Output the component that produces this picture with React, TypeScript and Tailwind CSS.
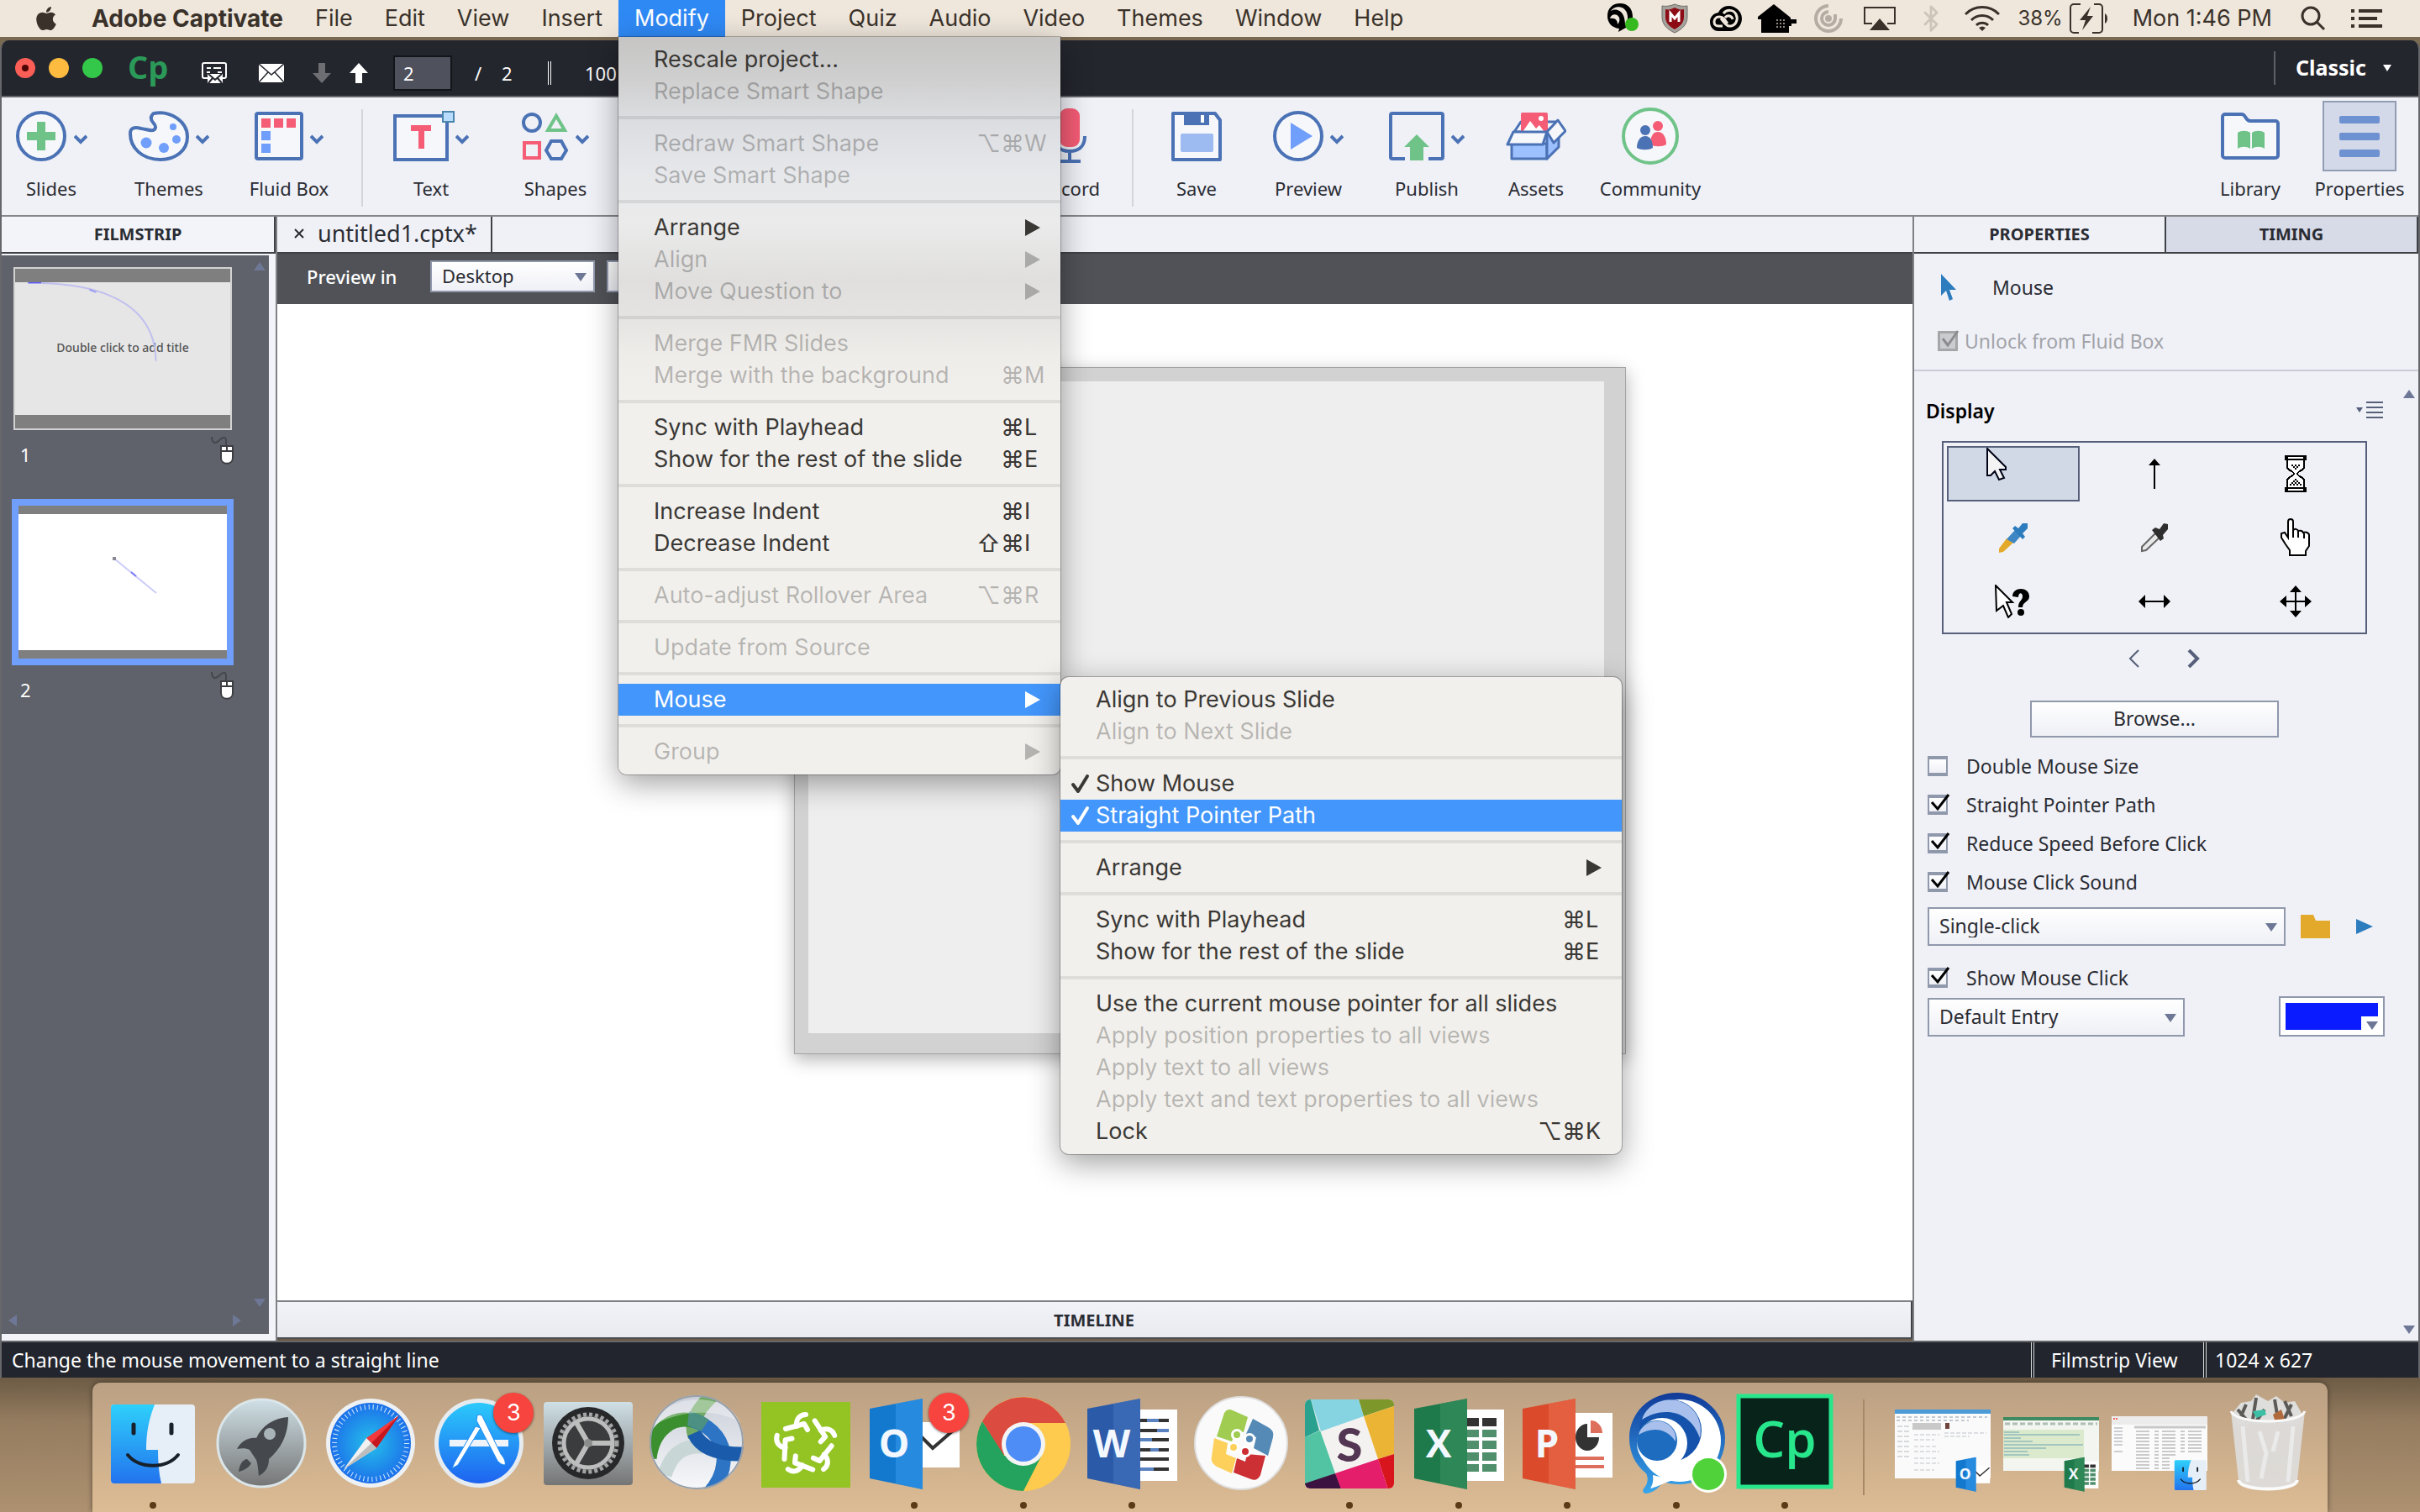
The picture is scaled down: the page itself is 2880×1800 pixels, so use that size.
import { useState, type ReactNode } from 'react';
import { Bluetooth } from 'lucide-react';
import { FaApple } from 'react-icons/fa';
import clsx from 'clsx';

interface MenuEntry {
    label: string;
    keys?: string[];
    off?: boolean;
    active?: boolean;
    checked?: boolean;
    arrow?: boolean;
    submenu?: MenuEntry[][];
}

const mouseMenu: MenuEntry[][] = [
    [{ label: 'Align to Previous Slide' }, { label: 'Align to Next Slide', off: true }],
    [{ label: 'Show Mouse', checked: true }, { label: 'Straight Pointer Path', checked: true, active: true }],
    [{ label: 'Arrange', arrow: true }],
    [
        { label: 'Sync with Playhead', keys: ['⌘', 'L'] },
        { label: 'Show for the rest of the slide', keys: ['⌘', 'E'] },
    ],
    [
        { label: 'Use the current mouse pointer for all slides' },
        { label: 'Apply position properties to all views', off: true },
        { label: 'Apply text to all views', off: true },
        { label: 'Apply text and text properties to all views', off: true },
        { label: 'Lock', keys: ['⌥⌘', 'K'] },
    ],
];

const modifyMenu: MenuEntry[][] = [
    [{ label: 'Rescale project...' }, { label: 'Replace Smart Shape', off: true }],
    [
        { label: 'Redraw Smart Shape', off: true, keys: ['⌥⌘', 'W'] },
        { label: 'Save Smart Shape', off: true },
    ],
    [
        { label: 'Arrange', arrow: true },
        { label: 'Align', off: true, arrow: true },
        { label: 'Move Question to', off: true, arrow: true },
    ],
    [
        { label: 'Merge FMR Slides', off: true },
        { label: 'Merge with the background', off: true, keys: ['⌘', 'M'] },
    ],
    [
        { label: 'Sync with Playhead', keys: ['⌘', 'L'] },
        { label: 'Show for the rest of the slide', keys: ['⌘', 'E'] },
    ],
    [
        { label: 'Increase Indent', keys: ['⌘', 'I'] },
        { label: 'Decrease Indent', keys: ['⇧⌘', 'I'] },
    ],
    [{ label: 'Auto-adjust Rollover Area', off: true, keys: ['⌥⌘', 'R'] }],
    [{ label: 'Update from Source', off: true }],
    [{ label: 'Mouse', active: true, arrow: true, submenu: mouseMenu }],
    [{ label: 'Group', off: true, arrow: true }],
];

function MenuRow({ entry }: { entry: MenuEntry }) {
    return (
        <li className="relative">
            <button
                disabled={entry.off}
                className={clsx(
                    'flex h-[38px] w-full items-center pr-[15px] text-left',
                    entry.active ? 'bg-[#4396fb] text-white' : entry.off ? 'text-black/25' : 'text-[#3a3835]',
                )}
            >
                <span className="flex w-[42px] shrink-0 items-center pl-3">
                    {entry.checked && (
                        <svg width="24" height="24" viewBox="0 0 24 24" fill="none" stroke="currentColor" strokeWidth="4" strokeLinecap="round" strokeLinejoin="round">
                            <path d="M3 13l6 8L20 3" />
                        </svg>
                    )}
                </span>
                <span className="flex-1 whitespace-nowrap">{entry.label}</span>
                {entry.keys && (
                    <>
                        <span className="text-[28px]">{entry.keys[0]}</span>
                        <span className="w-7">{entry.keys[1]}</span>
                    </>
                )}
                {entry.arrow && (
                    <svg width="27" height="20" viewBox="0 0 27 20" fill="currentColor">
                        <path d="M0 0l18 10L0 20z" />
                    </svg>
                )}
            </button>
            {entry.submenu && (
                <Menu
                    groups={entry.submenu}
                    className="absolute -top-2 left-full w-[668px] rounded-[10px] bg-[#f2f0ec]"
                />
            )}
        </li>
    );
}

function Menu({ groups, className }: { groups: MenuEntry[][]; className: string }) {
    return (
        <ul className={clsx('py-2 shadow-[0_10px_36px_rgba(0,0,0,0.38),0_0_0_1px_rgba(0,0,0,0.25)]', className)}>
            {groups.map((group, i) => (
                <li key={i}>
                    {i > 0 && <div className="my-[10px] h-1 bg-black/8" />}
                    <ul>
                        {group.map((entry) => (
                            <MenuRow key={entry.label} entry={entry} />
                        ))}
                    </ul>
                </li>
            ))}
        </ul>
    );
}

const menus = ['File', 'Edit', 'View', 'Insert', 'Modify', 'Project', 'Quiz', 'Audio', 'Video', 'Themes', 'Window', 'Help'];

const statusIcons: ReactNode[] = [
    <svg width="40" height="36" viewBox="0 0 40 36">
        <path d="M16 0c9 0 15 6 15 16 0 7-4 12-10 14l-7 4 1-4C6 29 1 23 1 15 1 6 7 0 16 0z" fill="#000" />
        <path d="M5 9C9 3 20 2 24 11c2 6 1 11-2 15 0-8-2-16-9-18-3-1-6 0-8 1zM4 18c1-5 8-7 11-1 1 3 0 6-2 8 0-4-2-8-9-7z" fill="#efe7dc" />
        <circle cx="30" cy="25" r="8" fill="#35b91f" />
    </svg>,
    <svg width="32" height="36" viewBox="0 0 32 36">
        <path d="M1 3C6 4 11 3 16 1c5 2 10 3 15 2v13c0 9-6 15-15 19C7 31 1 25 1 16z" fill="#a5a29c" stroke="#6f6d69" />
        <path d="M5 7c4 1 7 0 11-2 4 2 7 3 11 2v9c0 7-4 11-11 15C9 27 5 23 5 16z" fill="#8d0b14" />
        <path d="M11 22V12l5 6 5-6v10" fill="none" stroke="#fff" strokeWidth="3" />
    </svg>,
    <svg width="40" height="30" viewBox="0 0 40 30">
        <path d="M23 0c9 0 16 7 16 15S33 30 25 30H11C5 30 1 25 1 19S5 9 11 8c2-5 7-8 12-8z" fill="#000" />
        <path d="M27 24h-3c-3 0-4-2-6-4l-4-5M16 24h-5c-3 0-5-2-5-5s2-6 6-6c5 0 7 4 10 8M17 9c4-5 12-5 15 1s0 13-6 14M19 14c3-4 8-2 9 2" fill="none" stroke="#efe7dc" strokeWidth="3" />
    </svg>,
    <svg width="46" height="34" viewBox="0 0 46 34">
        <path d="M19 0l20 16v2h7v5h-6v3h-3v8H4V18H0v-3z" fill="#000" />
        <path d="M22 19h12M22 23h12M22 27h12" stroke="#8d8880" strokeWidth="2" strokeDasharray="2 2" />
    </svg>,
    <svg width="34" height="34" viewBox="0 0 34 34" fill="none" stroke="#b5ada3" strokeWidth="4">
        <path d="M17 2a15 15 0 1 0 15 15M17 9a8 8 0 1 0 8 8V12" />
        <circle cx="17" cy="17" r="2" />
    </svg>,
    <svg width="38" height="30" viewBox="0 0 38 30">
        <path d="M10 21H1V2h36v19h-9" fill="none" stroke="#3a322a" strokeWidth="2" />
        <path d="M19 15l12 14H7z" fill="#3a322a" />
    </svg>,
    <Bluetooth width={34} height={34} strokeWidth={2} className="text-[#cdc4ba]" />,
    <svg width="42" height="30" viewBox="0 0 42 30" fill="none" stroke="#3a322a" strokeWidth="3">
        <path d="M1 10a28 28 0 0 1 40 0M8 17a18 18 0 0 1 26 0M14 23a10 10 0 0 1 14 0" />
        <path d="M17 26q4-3 8 0l-4 4z" fill="#3a322a" stroke="none" />
    </svg>,
];

function MenuBar() {
    const [open, setOpen] = useState('Modify');

    return (
        <header className="relative z-20 flex h-11 items-center justify-between bg-[#efe7dc] pl-[23px] pr-[45px] font-['Inter',sans-serif] text-[27px] leading-[34px] text-[#3a322a]">
            <nav className="flex h-full items-center">
                <button className="flex w-[67px] justify-center pr-1" aria-label="Apple">
                    <FaApple size={32} />
                </button>
                <button className="px-[19px] text-[28px] font-bold whitespace-nowrap">Adobe Captivate</button>
                {menus.map((name) => (
                    <div key={name} className="relative h-full">
                        <button
                            onClick={() => setOpen(name)}
                            className={clsx('h-full px-[19px]', open === name && 'bg-[#2f89f5] text-white')}
                        >
                            {name}
                        </button>
                        {name === 'Modify' && open === name && (
                            <Menu
                                groups={modifyMenu}
                                className="absolute top-full left-0 w-[526px] rounded-b-[10px] bg-[linear-gradient(180deg,#c6c5c4_0px,#cfcfcf_50px,#dadbde_90px,#e6e7ea_160px,#ebebeb_220px,#e0dfde_290px,#e4e3e1_330px,#efedea_380px,#f2f0ed_440px)]"
                            />
                        )}
                    </div>
                ))}
            </nav>
            <div className="flex items-center">
                {statusIcons.map((icon, i) => (
                    <span key={i} className="flex w-[61px] justify-center">{icon}</span>
                ))}
                <span className="ml-3 text-[24px]">38%</span>
                <svg width="46" height="38" viewBox="0 0 46 38" fill="none" stroke="#3a322a" strokeWidth="2" className="ml-2">
                    <path d="M13 2H5a4 4 0 0 0-4 4v26a4 4 0 0 0 4 4h6M29 2h6a4 4 0 0 1 4 4v26a4 4 0 0 1-4 4h-8" />
                    <path d="M25 5L12 21h7l-4 12 13-17h-7z" fill="#3a322a" stroke="none" />
                    <path d="M42 13c4 2 4 10 0 12z" fill="#3a322a" stroke="none" />
                </svg>
                <span className="ml-[29px] whitespace-nowrap">Mon 1:46 PM</span>
                <svg width="30" height="30" viewBox="0 0 30 30" fill="none" stroke="#3a322a" strokeWidth="3" className="ml-[34px]">
                    <circle cx="12" cy="12" r="10" />
                    <path d="M19 19l9 9" />
                </svg>
                <svg width="37" height="22" viewBox="0 0 37 22" fill="#3a322a" className="ml-[30px]">
                    <path d="M0 0h4v4H0zM9 0h28v4H9zM0 9h4v4H0zM9 9h22v4H9zM0 18h4v4H0zM9 18h28v4H9z" />
                </svg>
            </div>
        </header>
    );
}

function TitleBar() {
    return (
        <div className="flex h-[68px] shrink-0 justify-between border-b-2 border-[#66676b] bg-[#24262e] text-white">
            <div className="flex items-center pl-4">
                <div className="flex gap-4">
                    <button aria-label="Close" className="flex size-6 items-center justify-center rounded-full bg-[#fb5e57]">
                        <span className="size-2 rounded-full bg-[#4d0503]" />
                    </button>
                    <button aria-label="Minimize" className="size-6 rounded-full bg-[#fdbc40]" />
                    <button aria-label="Zoom" className="size-6 rounded-full bg-[#34c84a]" />
                </div>
                <span className="ml-[30px] w-12 pb-1 font-['Open_Sans',sans-serif] text-[38px] leading-10 font-bold text-[#2b9a58]">Cp</span>
                <div className="flex h-full items-center pt-3">
                    <button aria-label="Storyboard" className="ml-10">
                        <svg width="30" height="26" viewBox="0 0 30 26" fill="none" stroke="#fff" strokeWidth="2">
                            <path d="M8 19H3a2 2 0 0 1-2-2V3a2 2 0 0 1 2-2h24a2 2 0 0 1 2 2v14a2 2 0 0 1-2 2h-5M6 7h5M14 7h9M6 12h4M19 12h5" />
                            <path d="M7 14h18v11H7z" fill="#fff" stroke="none" />
                            <path d="M8 14l8 7 8-7M8 25l5-6M24 25l-5-6" stroke="#24262e" />
                        </svg>
                    </button>
                    <button aria-label="Mail" className="ml-[38px]">
                        <svg width="30" height="22" viewBox="0 0 30 22">
                            <path d="M0 0h30v22H0z" fill="#fff" />
                            <path d="M0 0l15 13L30 0M0 22l11-12M30 22L19 10" fill="none" stroke="#24262e" strokeWidth="1.5" />
                        </svg>
                    </button>
                    <button aria-label="Next slide" className="ml-[34px]">
                        <svg width="22" height="24" viewBox="0 0 22 24" fill="#6d6e72">
                            <path d="M7 0h8v12h7L11 24 0 12h7z" />
                        </svg>
                    </button>
                    <button aria-label="Previous slide" className="ml-[22px]">
                        <svg width="22" height="24" viewBox="0 0 22 24" fill="#fff">
                            <path d="M7 24h8V12h7L11 0 0 12h7z" />
                        </svg>
                    </button>
                    <input
                        aria-label="Slide number"
                        defaultValue="2"
                        className="ml-[30px] h-[42px] w-[70px] border-2 border-[#14151a] bg-[#4f515c] px-2.5 text-[22px]"
                    />
                    <span className="ml-[27px] w-8 text-[22px]">/</span>
                    <span className="w-[55px] text-[22px]">2</span>
                    <span className="h-7 w-1 border-x border-white" />
                    <span className="ml-10 text-[22px]">100</span>
                </div>
            </div>
            <div className="flex items-center pr-8">
                <span className="h-10 w-0.5 bg-[#5d5f66]" />
                <button className="ml-6 flex items-center gap-5 text-[25px] font-bold">
                    Classic
                    <svg width="10" height="8" viewBox="0 0 10 8" fill="#fff">
                        <path d="M0 0h10L5 8z" />
                    </svg>
                </button>
            </div>
        </div>
    );
}

function Tool({ label, chevron, className, children }: { label: string; chevron?: boolean; className: string; children: ReactNode }) {
    return (
        <button className={clsx('flex shrink-0 flex-col items-center pt-4', className)}>
            <span className="flex h-[60px] items-center gap-2">
                {children}
                {chevron && (
                    <svg width="16" height="12" viewBox="0 0 16 12" fill="none" stroke="#4a72b5" strokeWidth="4" className="mt-2">
                        <path d="M1 2l7 7 7-7" />
                    </svg>
                )}
            </span>
            <span className="mt-[18px] text-[22px] leading-7 whitespace-nowrap">{label}</span>
        </button>
    );
}

function Divider() {
    return <span className="mt-3.5 h-[116px] w-0.5 shrink-0 bg-[#d3d5da]" />;
}

function Toolbar() {
    return (
        <div className="flex h-[142px] shrink-0 justify-between border-b-2 border-[#868689] bg-[#f0f1f7] pr-0.5 text-[#2a2c33]">
            <div className="flex">
                <Tool label="Slides" chevron className="w-[118px]">
                    <svg width="62" height="60" viewBox="0 0 62 60">
                        <circle cx="31" cy="30" r="28" fill="#f6f7fb" stroke="#4a72b5" strokeWidth="4" />
                        <path d="M26 13h10v12h12v10H36v12H26V35H14V25h12z" fill="#6fc388" />
                    </svg>
                </Tool>
                <Tool label="Themes" chevron className="w-[162px]">
                    <svg width="72" height="60" viewBox="0 0 72 60">
                        <path d="M30 3c19-4 40 9 40 28 0 16-14 27-32 27C16 58 2 44 2 27c0-7 5-8 13-6 7 1 16 5 17-1 1-5-7-7-5-13 1-2 2-4 3-4z" fill="#f6f7fb" stroke="#4a72b5" strokeWidth="4" />
                        <circle cx="21" cy="38" r="6.500" fill="#709efb" />
                        <circle cx="42" cy="44" r="6" fill="#709efb" />
                        <circle cx="57" cy="34" r="5" fill="#709efb" />
                        <circle cx="53" cy="19" r="4" fill="#709efb" />
                    </svg>
                </Tool>
                <Tool label="Fluid Box" chevron className="w-[124px]">
                    <svg width="58" height="58" viewBox="0 0 58 58">
                        <rect x="2" y="2" width="54" height="54" rx="2" fill="#f6f7fb" stroke="#4a72b5" strokeWidth="4" />
                        <path d="M8 8h11v11H8zM23 8h11v11H23zM38 8h11v11H38z" fill="#f55c75" />
                        <path d="M8 23h11v11H8zM8 38h11v11H8z" fill="#709efb" />
                    </svg>
                </Tool>
                <span className="w-6" />
                <Divider />
                <span className="w-[19px]" />
                <Tool label="Text" chevron className="w-[124px]">
                    <svg width="66" height="60" viewBox="0 0 66 60" className="overflow-visible">
                        <rect x="2" y="6" width="62" height="52" fill="#f6f7fb" stroke="#4a72b5" strokeWidth="4" />
                        <path d="M21 17h24v7H37v21h-7V24h-9z" fill="#f55c75" />
                        <rect x="59" y="1" width="13" height="12" fill="#b8dcfb" stroke="#4d86ad" strokeWidth="2" />
                    </svg>
                </Tool>
                <Tool label="Shapes" chevron className="w-[172px]">
                    <svg width="56" height="60" viewBox="0 0 56 60" fill="none" strokeWidth="4">
                        <circle cx="12" cy="14" r="10" stroke="#4a72b5" />
                        <path d="M41 6l10 17H31z" stroke="#6fc388" />
                        <rect x="3" y="38" width="18" height="18" stroke="#f55c75" />
                        <path d="M35 36h12l6 11-6 10H35l-6-10z" stroke="#4a72b5" />
                    </svg>
                </Tool>
                <span className="w-[452px] shrink-0" />
                <Tool label="Record" className="w-[148px]">
                    <svg width="42" height="66" viewBox="0 0 42 66">
                        <rect x="9" y="0" width="24" height="46" rx="9" fill="#f55c75" />
                        <path d="M3 33c0 12 7 18 18 18s18-6 18-18M21 51v12M8 63h26" fill="none" stroke="#4a72b5" strokeWidth="4" />
                    </svg>
                </Tool>
                <Divider />
                <Tool label="Save" className="w-[150px]">
                    <svg width="60" height="60" viewBox="0 0 60 60">
                        <path d="M2 3h50l6 8v47H2z" fill="#f6f7fb" stroke="#4a72b5" strokeWidth="4" strokeLinejoin="round" />
                        <path d="M15 3h30v14H15z" fill="#4a72b5" />
                        <path d="M35 5h4v9h-4z" fill="#fff" />
                        <rect x="11" y="27" width="39" height="22" rx="2" fill="#9dbbf0" />
                    </svg>
                </Tool>
                <Tool label="Preview" chevron className="w-[116px]">
                    <svg width="60" height="60" viewBox="0 0 60 60">
                        <circle cx="30" cy="30" r="28" fill="#f6f7fb" stroke="#4a72b5" strokeWidth="4" />
                        <path d="M21 14l26 16-26 16z" fill="#709efb" />
                    </svg>
                </Tool>
                <Tool label="Publish" chevron className="w-[166px]">
                    <svg width="66" height="58" viewBox="0 0 66 58">
                        <path d="M19 56H4a2 2 0 0 1-2-2V4a2 2 0 0 1 2-2h58a2 2 0 0 1 2 2v50a2 2 0 0 1-2 2H47" fill="none" stroke="#4a72b5" strokeWidth="4" />
                        <path d="M25 58V42h-7l15-15 15 15h-7v16z" fill="#6fc388" />
                    </svg>
                </Tool>
                <Tool label="Assets" className="w-[94px]">
                    <svg width="72" height="58" viewBox="0 0 72 58" stroke="#4a72b5" strokeWidth="3" strokeLinejoin="round">
                        <path d="M10 24l8-12h44l-14 12z" fill="#f6f7fb" />
                        <rect x="18" y="1" width="32" height="26" rx="2" fill="#f55c75" stroke="none" />
                        <path d="M20 24l9-13 7 9 4-4 6 8z" fill="#fff" stroke="none" />
                        <circle cx="42" cy="8" r="3" fill="#fff" stroke="none" />
                        <path d="M7 38h42v18H7z" fill="#9dc0ff" />
                        <path d="M49 24l14-12v30L49 56z" fill="#9dc0ff" />
                        <path d="M9 24h40l-5 15H2z" fill="#f6f7fb" />
                        <path d="M49 24l13-14 9 13-14 14z" fill="#f6f7fb" />
                    </svg>
                </Tool>
                <Tool label="Community" className="w-[178px]">
                    <svg width="70" height="70" viewBox="0 0 70 70">
                        <circle cx="35" cy="35" r="32" fill="#f6f7fb" stroke="#6fc388" strokeWidth="4" />
                        <circle cx="44" cy="23" r="6" fill="#f55c75" />
                        <path d="M35 45c0-9 3-15 9-15s10 6 10 15c-5 3-14 3-19 0z" fill="#f55c75" />
                        <circle cx="29" cy="28" r="6" fill="#4a72b5" />
                        <path d="M19 49c0-8 4-14 10-14s9 6 9 14c-5 3-14 3-19 0z" fill="#4a72b5" />
                    </svg>
                </Tool>
            </div>
            <div className="flex">
                <Tool label="Library" className="w-[124px]">
                    <svg width="70" height="56" viewBox="0 0 70 56">
                        <path d="M2 5a3 3 0 0 1 3-3h20c5 0 4 8 10 8h30a3 3 0 0 1 3 3v38a3 3 0 0 1-3 3H5a3 3 0 0 1-3-3z" fill="#f6f7fb" stroke="#4a72b5" strokeWidth="4" />
                        <path d="M20 24c4-3 11-3 15 0v19c-4-3-11-3-15 0zM37 24c4-3 11-3 15 0v19c-4-3-11-3-15 0z" fill="#6fc388" />
                    </svg>
                </Tool>
                <Tool label="Properties" className="w-[136px]">
                    <span className="flex h-[84px] w-[88px] flex-col items-center justify-center gap-[11px] border-2 border-[#929cb3] bg-[#d3d9e8]">
                        <span className="h-[9px] w-12 rounded-xs bg-[#6e92d1]" />
                        <span className="h-[9px] w-12 rounded-xs bg-[#6e92d1]" />
                        <span className="h-[9px] w-12 rounded-xs bg-[#6e92d1]" />
                    </span>
                </Tool>
            </div>
        </div>
    );
}

function Triangle({ className }: { className: string }) {
    return (
        <svg width="14" height="10" viewBox="0 0 14 10" fill="currentColor" className={className}>
            <path d="M0 0h14L7 10z" />
        </svg>
    );
}

function Select({ label, value, className }: { label: string; value: string; className: string }) {
    return (
        <div className={clsx('relative', className)}>
            <select
                aria-label={label}
                className="h-full w-full appearance-none border-2 border-[#9098ac] bg-linear-to-b from-white to-[#eff0f6] pb-0.5 pl-3 leading-7 text-[#2a2c33]"
            >
                <option>{value}</option>
            </select>
            <Triangle className="pointer-events-none absolute top-1/2 right-2.5 -mt-1 text-[#6e7896]" />
        </div>
    );
}

function SlideLabel({ number }: { number: number }) {
    return (
        <figcaption className="mt-2 flex h-8 items-center justify-between pl-2.5 text-[22px] text-white">
            <span className="mt-2.5">{number}</span>
            <svg width="28" height="34" viewBox="0 0 28 34">
                <path d="M2 1c0 7 4 9 8 5s9-7 9 0v5" fill="none" stroke="#45474d" strokeWidth="2" />
                <path d="M13 12h14v14c0 9-14 9-14 0z" fill="#fff" stroke="#3c3d42" strokeWidth="2" />
                <path d="M13 18h14M20 12v6" stroke="#3c3d42" strokeWidth="2" />
            </svg>
        </figcaption>
    );
}

function Filmstrip() {
    return (
        <aside className="flex w-[328px] shrink-0 flex-col border-r-2 border-[#808184] bg-[#f3f4f9]">
            <h2 className="flex h-11 items-center justify-center border-r-2 border-b-2 border-[#3f4244] text-[20px] font-bold">FILMSTRIP</h2>
            <div className="mt-0.5 mr-2 mb-2 flex flex-1 flex-col bg-[#5f626a] text-[#6e7896]">
                <div className="flex flex-1 justify-between">
                    <div className="w-[276px] pt-3 pl-3">
                        <figure className="mb-[42px]">
                            <div className="m-0.5 flex h-[194px] flex-col border-2 border-[#d2d2d2] bg-[#7f7f7f] py-4">
                                <div className="relative flex-1 bg-[#e6e6e6]">
                                    <svg viewBox="0 0 256 160" className="absolute inset-0 h-full w-full" fill="none">
                                        <path d="M14 0H30" stroke="#5a5aff" strokeWidth="3" />
                                        <path d="M30 1C70 2 167 10 168 95" stroke="#c0c0f0" strokeWidth="2" />
                                        <path d="M88 9l8 3" stroke="#9a9af5" strokeWidth="2" />
                                    </svg>
                                    <p className="flex h-full items-center justify-center pb-1 text-[14px] font-medium text-[#555]">Double click to add title</p>
                                </div>
                            </div>
                            <SlideLabel number={1} />
                        </figure>
                        <figure>
                            <div className="flex h-[198px] flex-col border-8 border-[#709efb] bg-[#7f7f7f] py-2.5">
                                <svg viewBox="0 0 248 162" className="w-full flex-1 bg-white" fill="none">
                                    <path d="M114 53l50 41" stroke="#ccccfa" strokeWidth="2" />
                                    <path d="M134 69l6 5" stroke="#7a7af5" strokeWidth="2" />
                                    <path d="M112 51h4v4h-4z" fill="#8a8a92" />
                                </svg>
                            </div>
                            <SlideLabel number={2} />
                        </figure>
                    </div>
                    <div className="flex flex-col justify-between pt-2 pr-1">
                        <Triangle className="rotate-180" />
                        <Triangle className="" />
                    </div>
                </div>
                <div className="flex h-8 items-center justify-between pr-[31px] pl-1.5">
                    <Triangle className="rotate-90" />
                    <Triangle className="-rotate-90" />
                </div>
            </div>
        </aside>
    );
}

function Stage() {
    return (
        <main className="flex min-w-0 flex-1 flex-col">
            <div className="flex h-11 border-b-2 border-[#3f4244] bg-[#f0f1f7]">
                <button className="flex items-center gap-4 border-r-2 border-[#3f4244] pr-4 pb-0.5 pl-5 text-[27px] leading-8">
                    <svg width="12" height="12" viewBox="0 0 12 12" stroke="#2a2c33" strokeWidth="2">
                        <path d="M1 1l10 10M11 1L1 11" />
                    </svg>
                    untitled1.cptx*
                </button>
            </div>
            <div className="flex h-[60px] items-center bg-[#505257] pb-1.5 pl-[35px] text-[22px] text-white">
                <span className="w-[147px] font-medium">Preview in</span>
                <Select label="Preview in" value="Desktop" className="h-[38px] w-[196px]" />
                <Select label="Size" value="1024" className="ml-3.5 h-[38px] w-[180px]" />
            </div>
            <div className="relative flex-1 bg-white">
                <div className="absolute top-[75px] left-[615px] h-[818px] w-[990px] border border-[#a4a4a4] bg-[#d2d2d2] pt-4 pr-[25px] pb-6 pl-4 shadow-[0_6px_20px_rgba(0,0,0,0.3)]">
                    <div className="h-full bg-[#eeeeee]" />
                </div>
            </div>
            <div className="mb-0.5 flex h-[46px] items-center justify-center border-t-2 border-r-2 border-b-2 border-t-[#808184] border-r-[#3f4244] border-b-[#4b4e50] bg-linear-to-b from-[#f2f3f8] to-[#e9eaf0] pt-0.5 text-[20px] font-bold">
                TIMELINE
            </div>
        </main>
    );
}

const pointers: ReactNode[] = [
    <svg width="26" height="40" viewBox="0 0 26 40" className="mb-auto">
        <path d="M2 1l22 22v3h-7l5 10-6 2-5-10-5 5H2z" fill="#f4f4f4" stroke="#000317" strokeWidth="2" />
    </svg>,
    <svg width="14" height="36" viewBox="0 0 14 36">
        <path d="M7 0l7 8H8v28H6V8H0z" />
    </svg>,
    <svg width="26" height="44" viewBox="0 0 26 44" shapeRendering="crispEdges">
        <path d="M3 5v9c0 4 8 5 8 8s-8 4-8 8v9h20v-9c0-4-8-5-8-8s8-4 8-8V5z" fill="#fff" stroke="#000" strokeWidth="2" />
        <path d="M0 0h26v6H0zM0 38h26v6H0z" />
        <path d="M4 2h18v2H4zM4 40h18v2H4z" fill="#fff" />
        <path d="M8 11h2v2H8zM12 11h2v2h-2zM16 11h2v2h-2zM10 13h2v2h-2zM14 13h2v2h-2zM12 15h2v2h-2zM12 28h2v2h-2zM10 30h2v2h-2zM14 30h2v2h-2zM8 32h2v2H8zM12 32h2v2h-2zM16 32h2v2h-2zM6 34h2v2H6zM10 34h2v2h-2zM14 34h2v2h-2zM18 34h2v2h-2z" />
    </svg>,
    <svg width="36" height="36" viewBox="0 0 36 36">
        <path d="M1 36v-5l9-12 8 5L6 35z" fill="#e3a92b" />
        <path d="M10 20L20 9l7 7-8 9z" fill="#3f87c4" />
        <path d="M17 7l3-3 4 3 5-6h6v6l-6 6 3 4-3 3z" fill="#2c7cbe" />
    </svg>,
    <svg width="36" height="36" viewBox="0 0 36 36">
        <path d="M3 34v-5L20 12l5 5L8 33z" fill="#e8e8e8" stroke="#666" strokeWidth="2" />
        <path d="M15 9l4-3 5 2 5-7 5 1v6l-6 7 1 4-4 3z" fill="#2e2e2e" />
    </svg>,
    <svg width="36" height="46" viewBox="0 0 36 46">
        <path d="M11 44v-6L6 31l-5-8v-5l4-1 4 6V4c0-4 6-4 6 0v11c0-3 6-3 6 1 0-2 6-2 6 2 1-3 7-1 7 2v13l-4 6v5z" fill="#fff" stroke="#000" strokeWidth="2" />
        <path d="M15 14v9M21 16v7M28 18v6" stroke="#000" strokeWidth="2" />
    </svg>,
    <svg width="46" height="40" viewBox="0 0 46 40">
        <path d="M2 1l20 20h-7l6 14-4 4-6-14-8 6z" fill="#fff" stroke="#000" strokeWidth="2" />
        <path d="M22 14c0-12 20-12 20 0 0 7-8 6-8 13h-5c0-8 5-8 5-13 0-5-5-5-5 1z" />
        <circle cx="32" cy="33" r="4" />
    </svg>,
    <svg width="38" height="16" viewBox="0 0 38 16">
        <path d="M0 8l8-8v7h22V0l8 8-8 8V9H8v7z" />
    </svg>,
    <svg width="38" height="38" viewBox="0 0 38 38">
        <path d="M19 0l7 8h-6v10h10v-6l8 7-8 7v-6H20v10h6l-7 8-7-8h6V20H8v6l-8-7 8-7v6h10V8h-6z" />
    </svg>,
];

function Check({ label, checked, className }: { label: string; checked?: boolean; className?: string }) {
    const [on, setOn] = useState(!!checked);

    return (
        <label className={clsx('flex h-6 items-center leading-6', className)}>
            <span className="relative size-6">
                <input
                    type="checkbox"
                    checked={on}
                    onChange={() => setOn(!on)}
                    className="block size-6 appearance-none border-x-2 border-y-4 border-[#9098ac] bg-linear-to-b from-white to-[#eff0f6]"
                />
                {on && (
                    <svg viewBox="0 0 24 24" className="pointer-events-none absolute inset-0 size-6 overflow-visible" fill="none" stroke="#000" strokeWidth="3">
                        <path d="M5 9l7 8L25 0" />
                    </svg>
                )}
            </span>
            <span className="ml-[22px] whitespace-nowrap">{label}</span>
        </label>
    );
}

function Properties() {
    const [pointer, setPointer] = useState(0);

    return (
        <aside className="flex w-[602px] shrink-0 flex-col border-l-2 border-[#808184] bg-[#f0f1f7] text-[23px]">
            <div className="flex h-11 border-b-2 border-[#3f4244] text-[20px] font-bold">
                <button className="flex-1">PROPERTIES</button>
                <button className="flex-1 border-x-2 border-[#3f4244] bg-[#d7dbe8]">TIMING</button>
            </div>
            <div className="flex h-20 items-center gap-[43px] pl-8">
                <svg width="18" height="32" viewBox="0 0 18 32" fill="#2c7cbe">
                    <path d="M0 0l18 19h-8l4 11-4 2-4-12-6 6z" />
                </svg>
                Mouse
            </div>
            <label className="mb-2.5 flex h-12 items-center gap-2 pl-7 text-[#a2a3a8]">
                <span className="relative size-6">
                    <input type="checkbox" disabled defaultChecked className="block size-6 appearance-none border-3 border-[#a6a6a8] bg-[#cbccd0]" />
                    <svg viewBox="0 0 24 24" className="pointer-events-none absolute inset-0 size-6 overflow-visible" fill="none" stroke="#8c8c8e" strokeWidth="3">
                        <path d="M6 9l6 8L24 0" />
                    </svg>
                </span>
                Unlock from Fluid Box
            </label>
            <div className="relative flex flex-1 flex-col border-t-2 border-[#c9ccd6]">
                <div className="absolute inset-y-0 right-1 flex flex-col justify-between pt-[22px] pb-2 text-[#6e7896]">
                    <Triangle className="rotate-180" />
                    <Triangle className="" />
                </div>
                <div className="mt-6 flex h-12 items-center justify-between pr-[42px] pb-0.5 pl-3.5">
                    <h3 className="font-semibold text-black">Display</h3>
                    <button aria-label="Panel menu">
                        <svg width="32" height="22" viewBox="0 0 32 22" fill="#56607a">
                            <path d="M0 7h8l-4 6zM12 0h20v2H12zM12 6h20v2H12zM12 12h20v2H12zM12 18h20v2H12z" />
                        </svg>
                    </button>
                </div>
                <div className="mt-[11px] mr-[61px] ml-[33px] flex flex-col items-center">
                    <div className="grid h-[230px] w-full grid-cols-3 grid-rows-3 gap-2.5 border-2 border-[#56607a] p-1">
                        {pointers.map((icon, i) => (
                            <button
                                key={i}
                                onClick={() => setPointer(i)}
                                className={clsx(
                                    'flex flex-col items-center justify-center',
                                    i === pointer && 'border-2 border-[#56607a] bg-[#d2d9e6] pr-10',
                                )}
                            >
                                {icon}
                            </button>
                        ))}
                    </div>
                    <div className="mt-[18px] flex gap-[57px] pl-[22px]">
                        <svg width="13" height="22" viewBox="0 0 13 22" fill="none" stroke="#56607a" strokeWidth="2">
                            <path d="M12 1L2 11l10 10" />
                        </svg>
                        <svg width="15" height="22" viewBox="0 0 15 22" fill="none" stroke="#56607a" strokeWidth="4">
                            <path d="M2 1l10 10L2 21" />
                        </svg>
                    </div>
                    <button className="mt-[39px] h-11 w-[296px] border-2 border-[#9098ac] bg-linear-to-b from-white to-[#eff0f6] pb-0.5">Browse...</button>
                </div>
                <div className="mt-[22px] ml-4 flex flex-col gap-[22px]">
                    <Check label="Double Mouse Size" />
                    <Check label="Straight Pointer Path" checked />
                    <Check label="Reduce Speed Before Click" checked />
                    <Check label="Mouse Click Sound" checked />
                </div>
                <div className="mt-[18px] ml-4 flex items-center">
                    <Select label="Mouse Click Sound" value="Single-click" className="h-[46px] w-[426px]" />
                    <button aria-label="Open folder" className="ml-[18px]">
                        <svg width="35" height="28" viewBox="0 0 35 28" fill="#e3a92b">
                            <path d="M0 0h15l3 7h17v21H0z" />
                        </svg>
                    </button>
                    <button aria-label="Play" className="ml-[31px]">
                        <svg width="20" height="18" viewBox="0 0 20 18" fill="#2c7cbe">
                            <path d="M0 0l20 9L0 18z" />
                        </svg>
                    </button>
                </div>
                <Check label="Show Mouse Click" checked className="mt-[26px] ml-4" />
                <div className="mt-2.5 mr-10 ml-4 flex items-end justify-between">
                    <Select label="Show Mouse Click" value="Default Entry" className="h-[46px] w-[306px]" />
                    <button aria-label="Colour" className="flex h-12 w-[126px] border-2 border-[#9098ac] bg-white p-1.5">
                        <span className="flex h-8 flex-1 items-end justify-end bg-[#0a1cff]">
                            <span className="flex h-4 w-5 items-end justify-end bg-white">
                                <Triangle className="text-[#6e7896]" />
                            </span>
                        </span>
                    </button>
                </div>
            </div>
        </aside>
    );
}

function FinderIcon() {
    return (
        <>
            <rect x="10" y="14" width="100" height="94" rx="4" fill="#e6eef7" />
            <path d="M14 14h48c-7 18-10 34-10 54h14c0 14 1 28 4 40H14a4 4 0 0 1-4-4V18a4 4 0 0 1 4-4z" fill="url(#finder)" />
            <path d="M37 38v10M82 38v10" stroke="#17202b" strokeWidth="5" strokeLinecap="round" />
            <path d="M30 74c14 17 46 17 60 0" fill="none" stroke="#17202b" strokeWidth="4" strokeLinecap="round" />
        </>
    );
}

// Office icon: a swung-open door carrying the letter, a white sheet behind it
function OfficeIcon({ letter, from, to, children }: { letter: string; from: string; to: string; children: ReactNode }) {
    return (
        <>
            {children}
            <path d="M7 19l63-12v108L7 102z" fill={from} />
            <path d="M38 13l32-6v108l-32-7z" fill={to} opacity="0.5" />
            <text x="36" y="77" textAnchor="middle" fontFamily="Open Sans, sans-serif" fontSize="46" fontWeight="700" fill="#f3f8ff">{letter}</text>
        </>
    );
}

function OutlookIcon() {
    return (
        <OfficeIcon letter="O" from="#1379cf" to="#3a9df0">
            <path d="M60 35h54v54H60z" fill="#fff" />
            <path d="M68 52l14 14 30-26" fill="none" stroke="#333" strokeWidth="4" />
        </OfficeIcon>
    );
}

function ExcelIcon() {
    return (
        <OfficeIcon letter="X" from="#1f7a4b" to="#3c9363">
            <path d="M60 20h54v85H60z" fill="#fff" />
            <path d="M68 30h16v10H68zM88 30h17v10H88z" fill="#333" />
            <path d="M68 44h16v9H68zM88 44h17v9H88zM68 57h16v10H68zM88 57h17v10H88zM68 71h16v10H68zM88 71h17v10H88zM68 85h16v9H68zM88 85h17v9H88z" fill="#4f8f6c" />
        </OfficeIcon>
    );
}

interface DockApp {
    name: string;
    running?: boolean;
    badge?: string;
    art: ReactNode;
}

const apps: DockApp[] = [
    { name: 'Finder', running: true, art: <FinderIcon /> },
    {
        name: 'Launchpad',
        art: (
            <>
                <circle cx="60" cy="60" r="52" fill="url(#steel)" stroke="#dbe6ea" strokeWidth="3" />
                <path d="M92 29c-17 1-31 10-38 25-10-1-18 4-23 13 6-1 11-1 15 1l8 12c2 6 2 11 3 19 8-4 12-11 12-20 14-12 23-29 23-50z" fill="#45494d" />
                <path d="M43 79c-6 1-9 7-10 15 8-2 13-6 15-10z" fill="#45494d" />
                <circle cx="70" cy="49" r="7" fill="#a9b4b8" />
            </>
        ),
    },
    {
        name: 'Safari',
        art: (
            <>
                <circle cx="60" cy="60" r="53" fill="#eef1f3" />
                <circle cx="60" cy="60" r="48" fill="url(#safari)" />
                <circle cx="60" cy="60" r="43" fill="none" stroke="#d5ecfb" strokeWidth="6" strokeDasharray="1 4" />
                <path d="M94 27L67 66 55 54z" fill="#f2393c" />
                <path d="M94 27L67 66l-6-6z" fill="#c7171e" />
                <path d="M28 91l27-37 12 12z" fill="#f1f1f1" />
                <path d="M28 91l33-31 6 6z" fill="#bdbdbd" />
            </>
        ),
    },
    {
        name: 'App Store',
        badge: '3',
        art: (
            <>
                <circle cx="60" cy="60" r="53" fill="#e6ebef" />
                <circle cx="60" cy="60" r="48" fill="url(#store)" />
                <path d="M25 56h70v8H25z" fill="#eef4fa" />
                <path d="M56 40L31 83l-3 7 7-4 27-44zM58 27c3-2 6 0 7 3l21 43c4 5 6 9 5 13-4 0-8-3-10-7L57 33z" fill="#fff" stroke="#1d8bf2" />
            </>
        ),
    },
    {
        name: 'System Preferences',
        art: (
            <>
                <rect x="7" y="11" width="106" height="99" rx="4" fill="url(#steel)" />
                <circle cx="60" cy="60" r="43" fill="#26282a" />
                <circle cx="60" cy="60" r="34" fill="#3a3c3d" stroke="#a3a5a5" strokeWidth="5" strokeDasharray="4 3" />
                <circle cx="60" cy="60" r="29" fill="none" stroke="#bcbdbc" strokeWidth="5" />
                <path d="M60 60h30M60 60L45 34M60 60L45 86" stroke="#bcbdbc" strokeWidth="6" />
                <circle cx="60" cy="60" r="5" fill="#8b8d8d" />
            </>
        ),
    },
    {
        name: 'AnyConnect',
        art: (
            <>
                <clipPath id="globe">
                    <circle cx="60" cy="59" r="56" />
                </clipPath>
                <circle cx="60" cy="59" r="56" fill="url(#glass)" />
                <g fill="none" strokeWidth="17" clipPath="url(#globe)">
                    <path d="M22 98c8-26 22-36 48-34" stroke="#c9d6d6" />
                    <path d="M80 2C60 20 52 36 58 52" stroke="#6fa964" />
                    <path d="M4 78C8 44 32 26 58 34" stroke="#3b8f2f" />
                    <path d="M56 33c24 8 38 26 36 50-1 14-7 26-18 38" stroke="#2d74c4" />
                    <path d="M57 48c8 18 30 26 62 25" stroke="#1a5cab" />
                    <path d="M50 31c8 1 14 4 20 8" stroke="#4c8f83" />
                </g>
                <path d="M8 40C20 0 96-4 112 36 90 20 40 18 8 40z" fill="#fff" opacity="0.35" />
                <circle cx="60" cy="59" r="55" fill="none" stroke="#98a0aa" strokeWidth="2" />
            </>
        ),
    },
    {
        name: 'Green Arrows',
        art: (
            <>
                <rect x="7" y="11" width="106" height="102" fill="#93c423" />
                <g fill="none" stroke="#fff" strokeWidth="6" strokeLinecap="round" strokeLinejoin="round">
                    {[0, 72, 144, 216, 288].map((angle) => (
                        <path key={angle} d="M36 43l22-6 4 7M49 40c-1-9 4-14 11-14" transform={`rotate(${angle} 60 62)`} />
                    ))}
                </g>
            </>
        ),
    },
    { name: 'Outlook', running: true, badge: '3', art: <OutlookIcon /> },
    {
        name: 'Chrome',
        running: true,
        art: (
            <>
                <circle cx="60" cy="61" r="56" fill="#fecb4f" />
                <path d="M11 34A56 56 0 0 1 110 36H60L36 75z" fill="#dc4b40" />
                <path d="M11 34a56 56 0 0 0 49 83l22-43-45 1z" fill="#24a35e" />
                <circle cx="60" cy="61" r="26" fill="#f4f4f4" />
                <circle cx="60" cy="61" r="21" fill="#4e8df5" />
            </>
        ),
    },
    {
        name: 'Word',
        running: true,
        art: (
            <OfficeIcon letter="W" from="#2b5aa8" to="#4777bf">
                <path d="M60 20h54v85H60z" fill="#fff" />
                <path d="M70 33h34M70 45h34M70 56h34M70 68h34M70 79h34M70 91h34" stroke="#333" strokeWidth="4" />
                <path d="M78 33h14M90 45h14M70 56h14M82 68h10M70 91h16" stroke="#5a82c0" strokeWidth="4" />
            </OfficeIcon>
        ),
    },
    {
        name: 'Pinwheel',
        art: (
            <>
                <circle cx="60" cy="60" r="55" fill="#fafafa" stroke="#dedede" strokeWidth="2" />
                <path d="M40 24q4-6 10-3l18 8-5 18-9-2-5 13-18-6z" fill="#a0cc52" />
                <path d="M74 31l18 10q8 4 6 12l-6 22-17-9 3-13-12-4z" fill="#548ab5" />
                <path d="M28 54l16 6-2 13 12 5-5 18-18-8q-8-5-6-12z" fill="#fcd05a" />
                <path d="M67 73l22 2-6 23q-4 8-11 5L51 95l4-17 10 4z" fill="#cc2f34" />
                <g fill="#fff">
                    <circle cx="55" cy="50" r="7" />
                    <circle cx="70" cy="55" r="7" />
                    <circle cx="51" cy="65" r="7" />
                    <circle cx="65" cy="70" r="7" />
                </g>
                <circle cx="55" cy="50" r="4" fill="#a0cc52" />
                <circle cx="70" cy="55" r="4" fill="#548ab5" />
                <circle cx="51" cy="65" r="4" fill="#fcd05a" />
                <circle cx="65" cy="70" r="4" fill="#cc2f34" />
            </>
        ),
    },
    {
        name: 'Slack',
        running: true,
        art: (
            <>
                <clipPath id="slack">
                    <rect x="7" y="8" width="106" height="106" rx="6" />
                </clipPath>
                <g clipPath="url(#slack)">
                    <path d="M0 0h120v120H0z" fill="#f4f2f0" />
                    <path d="M7 8h7l10 37-17 8z" fill="#2aa18e" />
                    <path d="M14 8h57l6 20-51 18z" fill="#86d4e2" />
                    <path d="M71 8h42v8L77 28z" fill="#7d972b" />
                    <path d="M77 28l36-12v57l-19 6z" fill="#ecb435" />
                    <path d="M7 53l18-8 18 51-36 14z" fill="#52c4a4" />
                    <path d="M43 96l51-17 12 36H49z" fill="#e51e6c" />
                    <path d="M94 79l19-6v42h-7z" fill="#d8141d" />
                    <path d="M7 108l36-12 7 19H7z" fill="#3c1340" />
                </g>
                <text x="60" y="82" textAnchor="middle" fontFamily="Lato, sans-serif" fontSize="56" fontWeight="900" fill="#533653">S</text>
            </>
        ),
    },
    { name: 'Excel', running: true, art: <ExcelIcon /> },
    {
        name: 'PowerPoint',
        running: true,
        art: (
            <OfficeIcon letter="P" from="#da4a2b" to="#ee7255">
                <path d="M60 24h54v77H60z" fill="#fff" />
                <path d="M84 37v16h14a14 16 0 1 1-14-16z" fill="#333" />
                <path d="M88 33a14 15 0 0 1 14 15H88z" fill="#dd6f5c" />
                <path d="M68 78h36M68 88h36" stroke="#dd6f5c" strokeWidth="4" />
            </OfficeIcon>
        ),
    },
    {
        name: 'Jabber',
        running: true,
        art: (
            <>
                <path d="M61 0c32 0 57 24 57 54s-22 55-54 55c-8 0-14-1-20-3-5 8-12 13-20 14-4 0-5-4-2-7 4-5 5-11 2-17C11 86 4 71 4 54 4 24 28 0 61 0z" fill="url(#jabber)" />
                <path d="M32 98l24 6c-8 2-18 8-27 10 3-5 4-10 3-16z" fill="#fff" />
                <circle cx="64" cy="57" r="49" fill="#fff" />
                <circle cx="53" cy="45" r="37" fill="#1552ab" />
                <path d="M19 32c8-24 38-30 56-16 12 9 16 24 13 38-12-34-44-38-69-22z" fill="#a9c0ec" />
                <circle cx="43" cy="60" r="30" fill="#fff" />
                <circle cx="37" cy="57" r="24" fill="#1d6cc0" />
                <path d="M15 50c4-16 26-22 38-10 5 5 7 11 6 18-10-16-28-18-44-8z" fill="#a9c0ec" />
                <circle cx="98" cy="97" r="22" fill="#fff" />
                <circle cx="98" cy="97" r="19" fill="#50d33a" />
            </>
        ),
    },
    {
        name: 'Captivate',
        running: true,
        art: (
            <>
                <rect x="5" y="4" width="110" height="108" fill="#08231a" stroke="#28e68c" strokeWidth="5" />
                <text x="60" y="77" textAnchor="middle" fontFamily="Open Sans, sans-serif" fontSize="60" fontWeight="600" fill="#28e68c">Cp</text>
            </>
        ),
    },
];

const windows: DockApp[] = [
    {
        name: 'Outlook window',
        art: (
            <>
                <path d="M3 20h114v82H3z" fill="#fafafa" />
                <path d="M3 20h114v5H3z" fill="#4b9bd8" />
                <path d="M5 29h108M5 33h86" stroke="#c3cad2" strokeWidth="2" strokeDasharray="4 3" />
                <path d="M6 40h14M6 46h14M6 52h14M6 58h14M6 64h14M6 70h14M6 76h14" stroke="#b5b9c0" strokeDasharray="6 2" />
                <path d="M24 36h34v8H24z" fill="#c9c9c9" />
                <path d="M26 50h30M26 56h24M26 64h28M26 70h30M26 78h26M26 84h30M26 92h24M62 48h50M62 52h30" stroke="#bfc3c9" strokeDasharray="5 2" />
                <path d="M63 36h5v7h-5z" fill="#70443c" />
                <g transform="translate(73 74) scale(0.38)"><OutlookIcon /></g>
            </>
        ),
    },
    {
        name: 'Excel window',
        art: (
            <>
                <path d="M3 29h114v64H3z" fill="#f2f5f0" />
                <path d="M3 29h114v4H3z" fill="#3e8a61" />
                <path d="M5 37h110" stroke="#aebeb4" strokeWidth="3" strokeDasharray="6 3" />
                <path d="M3 44h96v34H3z" fill="#dbeacc" />
                <path d="M4 47h18M4 50h90M4 54h20M4 58h34M4 62h94M4 66h50M4 70h28M4 74h30" stroke="#a3c6c0" strokeWidth="2" />
                <g transform="translate(73 74) scale(0.38)"><ExcelIcon /></g>
            </>
        ),
    },
    {
        name: 'Finder window',
        art: (
            <>
                <path d="M3 28h114v65H3z" fill="#fbfbfb" />
                <path d="M3 28h114v10H3z" fill="#ececec" />
                <path d="M5 31h6" stroke="#ef6a5c" strokeWidth="2" strokeDasharray="2 1" />
                <path d="M6 42h10M6 46h10M6 50h10M6 54h10M6 58h10M6 62h10M6 70h10" stroke="#9ea2a8" />
                <path d="M30 41h85" stroke="#c9c9c9" strokeWidth="3" />
                <path d="M32 46h78M32 50h78M32 54h78M32 58h78M32 62h78M32 66h78M32 70h78M32 74h50M32 78h40M32 82h40M32 86h40M32 90h40" stroke="#999" strokeDasharray="16 6 5 4" />
                <g transform="translate(74 75) scale(0.38)"><FinderIcon /></g>
            </>
        ),
    },
    {
        name: 'Trash',
        art: (
            <>
                <path d="M18 24l10-12 12-2 6-8 14 8 10-6 10 8 12-2 8 14-4 14H24z" fill="#dededc" />
                <path d="M24 20l12 14M46 6l-4 26M68 8l4 24M88 14L78 34M56 20l-10 14M34 14l-6 14M80 10l8 18" stroke="#5d5b57" strokeWidth="4" />
                <path d="M66 26l10-6 4 12-10 6z" fill="#b06a3c" />
                <path d="M42 22l14-2 2 6-12 4z" fill="#3bc0a5" />
                <path d="M16 22c6 16 82 16 88 0l-9 82c-2 14-68 14-70 0z" fill="#dddcdb" opacity="0.94" />
                <path d="M30 40l6 66M90 40l-6 66M50 46l8 26-6 30M72 46l-6 24" stroke="#eaeaea" strokeWidth="5" fill="none" />
                <path d="M16 22c6 16 82 16 88 0" fill="none" stroke="#fafafa" strokeWidth="3" />
                <path d="M25 104c2 14 68 14 70 0" fill="none" stroke="#fafafa" strokeWidth="4" />
            </>
        ),
    },
];

function DockItem({ app, className }: { app: DockApp; className: string }) {
    return (
        <button aria-label={app.name} className={clsx('relative flex flex-col items-center', className)}>
            <svg width="120" height="120" viewBox="0 0 120 120" className="shrink-0">{app.art}</svg>
            {app.badge && (
                <span className="absolute top-0 left-1/2 ml-[17px] flex size-12 items-center justify-center rounded-full bg-[#f8443e] font-['Inter',sans-serif] text-[27px] text-white shadow-[0_1px_3px_rgba(0,0,0,0.5)]">
                    {app.badge}
                </span>
            )}
            {app.running && <span className="mt-2.5 size-2 rounded-full bg-[#5a3a17]" />}
        </button>
    );
}

function Dock() {
    return (
        <footer className="mx-[110px] mt-1.5 flex h-[154px] rounded-t-[10px] bg-linear-to-b from-[#bba083] to-[#dcbc94] px-[7px] pt-3 shadow-[0_0_6px_rgba(0,0,0,0.45)]">
            <svg width="0" height="0" className="absolute">
                <defs>
                    <linearGradient id="finder" x2="0" y2="1"><stop stopColor="#2fd0fb" /><stop offset="1" stopColor="#2273ee" /></linearGradient>
                    <linearGradient id="steel" x2="0" y2="1"><stop stopColor="#cfe0e6" /><stop offset="1" stopColor="#757575" /></linearGradient>
                    <linearGradient id="store" x2="0" y2="1"><stop stopColor="#2bc9fb" /><stop offset="1" stopColor="#1e63f0" /></linearGradient>
                    <linearGradient id="jabber" x2="0" y2="1"><stop stopColor="#113a98" /><stop offset="1" stopColor="#37a6ec" /></linearGradient>
                    <linearGradient id="glass" x2="0" y2="1"><stop stopColor="#c9ced8" /><stop offset="1" stopColor="#f7f8fa" /></linearGradient>
                    <radialGradient id="safari"><stop stopColor="#25c0ea" /><stop offset="1" stopColor="#1c70ea" /></radialGradient>
                </defs>
            </svg>
            {apps.map((app) => (
                <DockItem key={app.name} app={app} className="flex-1" />
            ))}
            <span className="mx-7 mt-2 h-[114px] w-0.5 bg-[#a68a68]" />
            {windows.map((app) => (
                <DockItem key={app.name} app={app} className="w-[129px]" />
            ))}
        </footer>
    );
}

export default function App() {
    return (
        <div className="flex min-h-screen flex-col overflow-hidden bg-[linear-gradient(180deg,#7b6a52_0%,#6b5a44_91%,#957c60_94%,#ad9170_100%)] font-['Noto_Sans',sans-serif] text-[#2a2c33]">
            <MenuBar />
            <div className="mt-1 flex flex-1 flex-col overflow-hidden rounded-t-[10px] border-x-2 border-[#66676b]">
                <TitleBar />
                <Toolbar />
                <div className="flex flex-1">
                    <Filmstrip />
                    <Stage />
                    <Properties />
                </div>
                <footer className="flex h-11 shrink-0 items-center justify-between border-t-2 border-[#66676b] bg-[#22252d] text-[23px] text-white">
                    <span className="pl-3">Change the mouse movement to a straight line</span>
                    <span className="flex h-full items-center">
                        <span className="h-full w-1 border-x border-[#d8d8d8]" />
                        <span className="w-[201px] pl-5">Filmstrip View</span>
                        <span className="h-full w-1 border-x border-[#d8d8d8]" />
                        <span className="w-[252px] pl-2.5">1024 x 627</span>
                    </span>
                </footer>
            </div>
            <Dock />
        </div>
    );
}
